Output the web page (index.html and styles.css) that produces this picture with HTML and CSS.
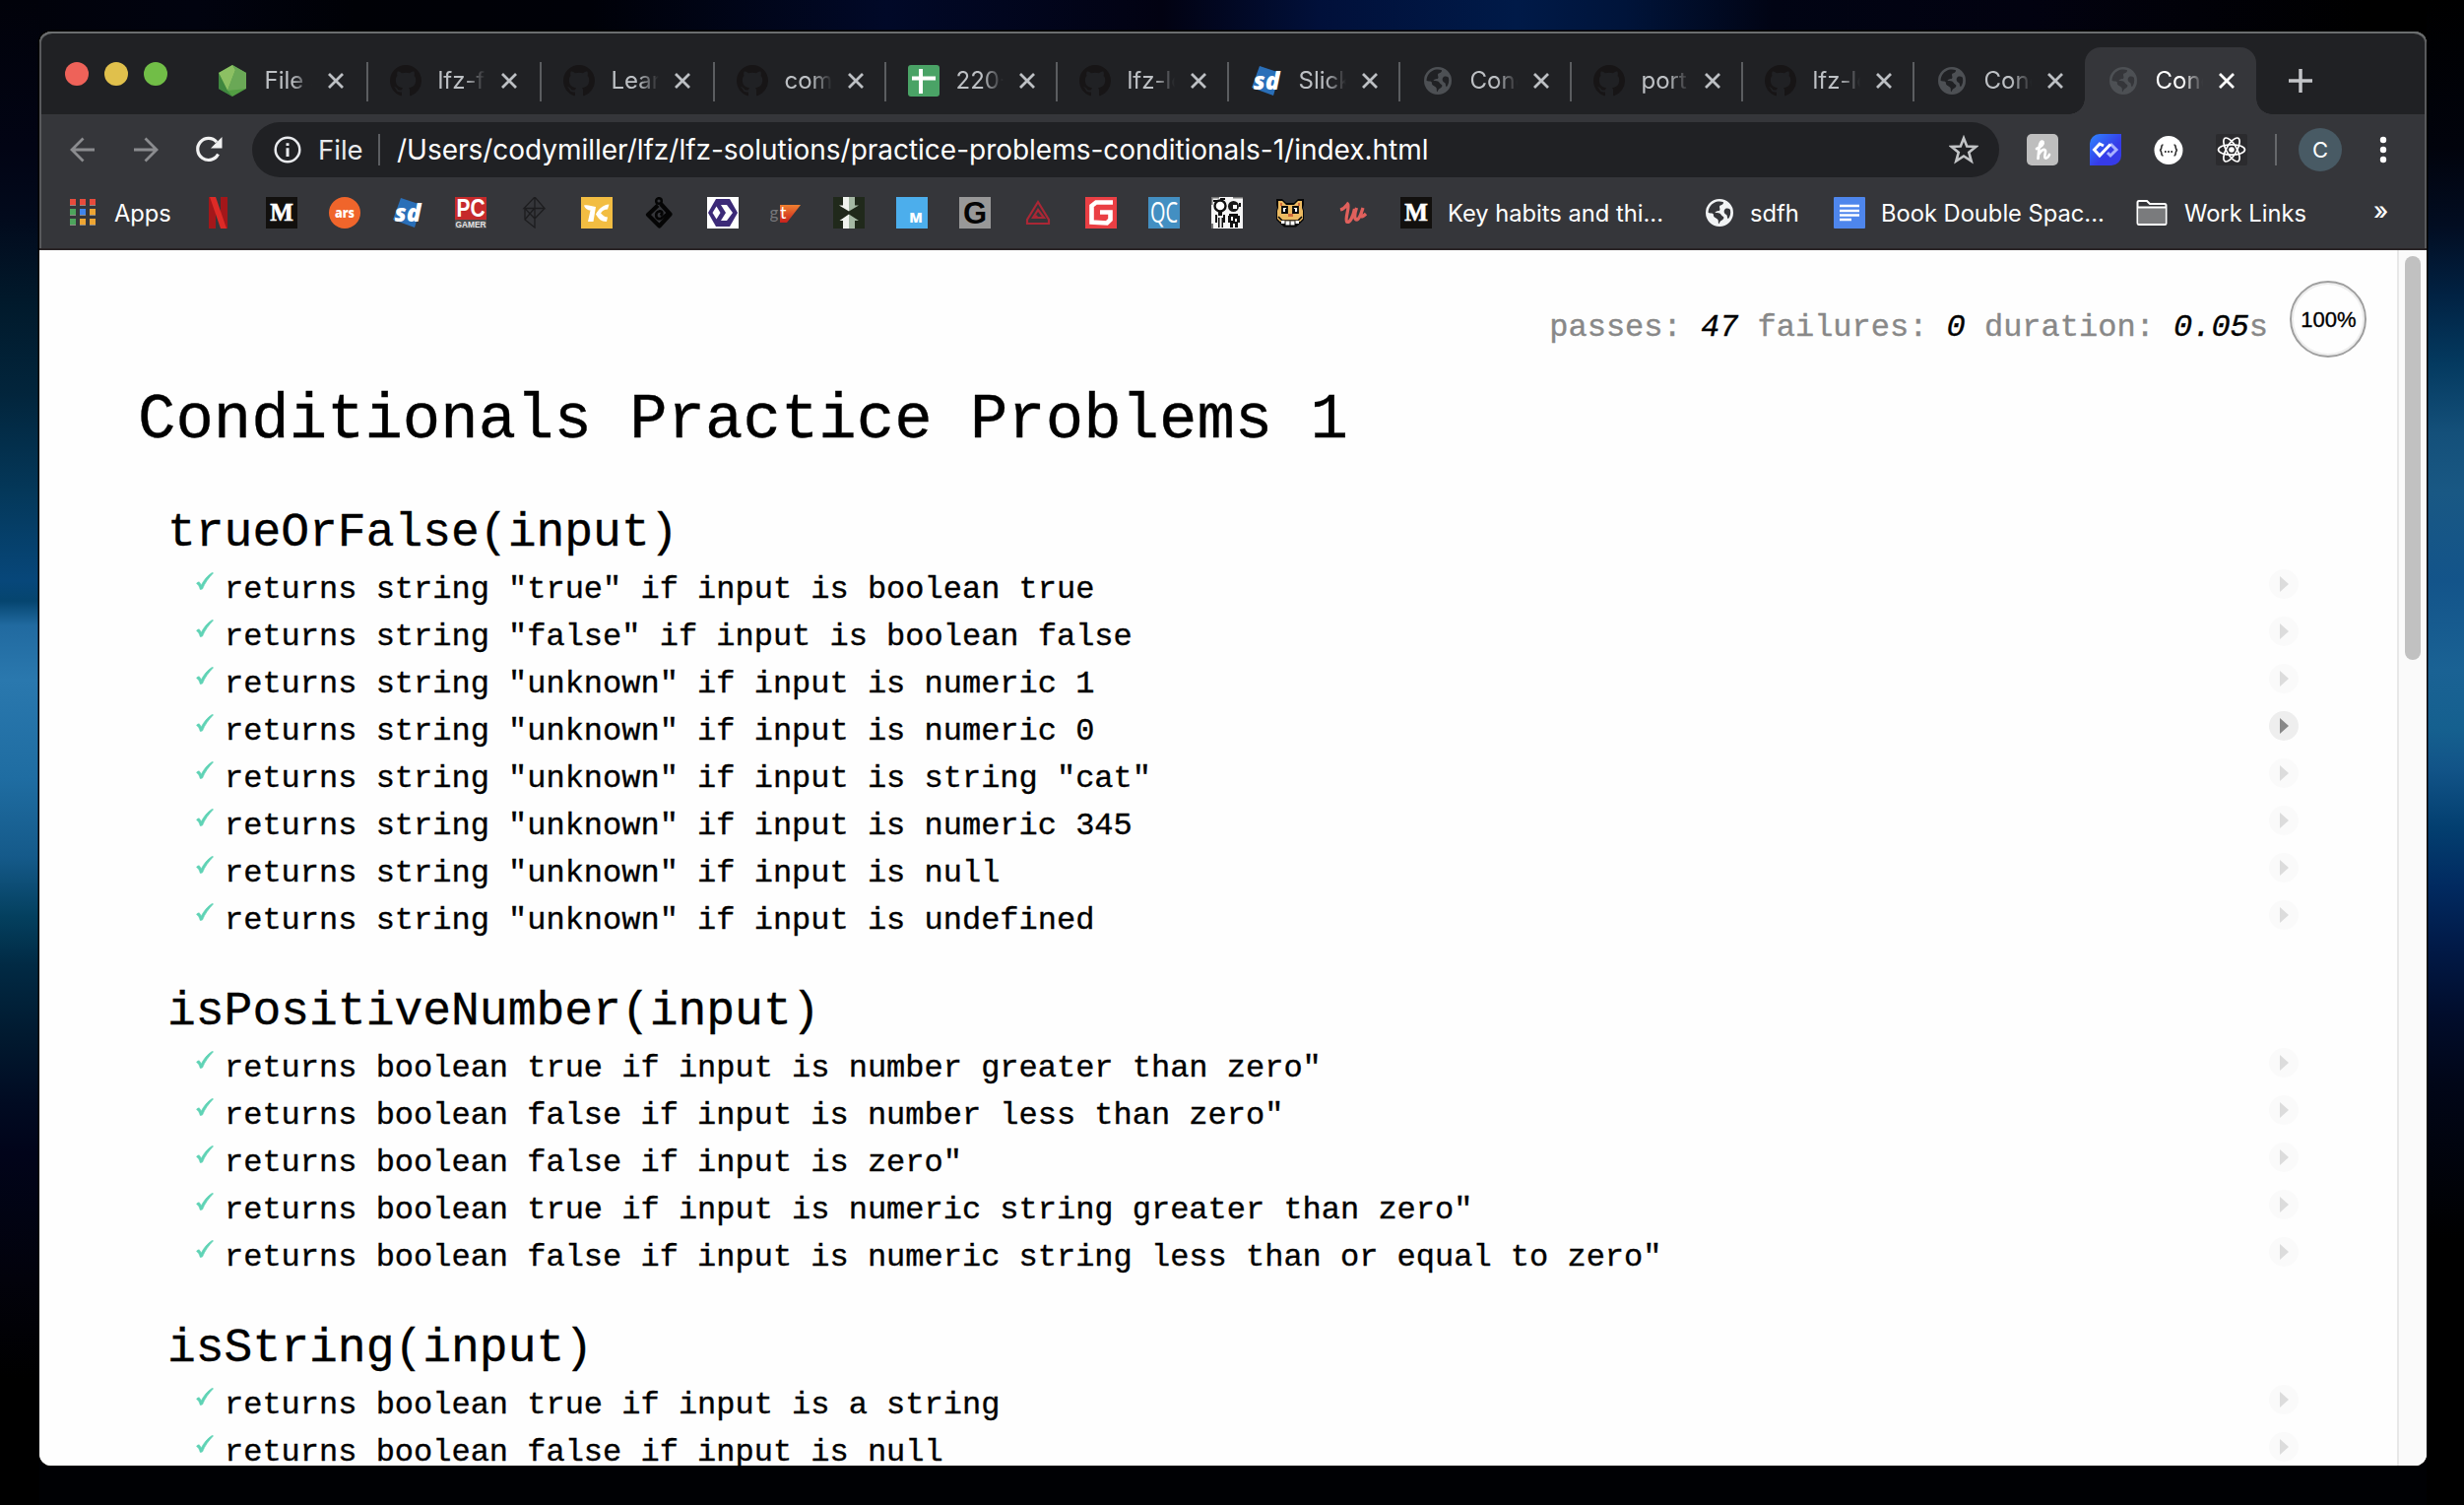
FILE: index.html
```html
<!DOCTYPE html>
<html lang="en">
<head>
<meta charset="utf-8">
<title>Conditionals Practice Problems 1</title>
<link rel="stylesheet" href="styles.css">
</head>
<body>
<svg class="defs" width="0" height="0" aria-hidden="true">
  <symbol id="github" viewBox="0 0 16 16"><path fill="#171516" fill-rule="evenodd" d="M8 0C3.58 0 0 3.58 0 8c0 3.54 2.29 6.53 5.47 7.59.4.07.55-.17.55-.38 0-.19-.01-.82-.01-1.49-2.01.37-2.53-.49-2.69-.94-.09-.23-.48-.94-.82-1.13-.28-.15-.68-.52-.01-.53.63-.01 1.08.58 1.23.82.72 1.21 1.87.87 2.33.66.07-.52.28-.87.51-1.07-1.78-.2-3.64-.89-3.64-3.95 0-.87.31-1.59.82-2.15-.08-.2-.36-1.02.08-2.12 0 0 .67-.21 2.2.82.64-.18 1.32-.27 2-.27s1.36.09 2 .27c1.53-1.04 2.2-.82 2.2-.82.44 1.1.16 1.92.08 2.12.51.56.82 1.27.82 2.15 0 3.07-1.87 3.75-3.65 3.95.29.25.54.73.54 1.48 0 1.07-.01 1.93-.01 2.2 0 .21.15.46.55.38A8.01 8.01 0 0 0 16 8c0-4.42-3.58-8-8-8z"/></symbol>
  <symbol id="globe" viewBox="0 0 28 28"><path fill="currentColor" fill-rule="evenodd" d="M14 0a14 14 0 1 0 0 28a14 14 0 0 0 0-28zM11 2.8c2.5-.6 5-.4 7 .4c0 1-.3 2-1.3 2.600c-1.200.7-2.700.7-2.700 2.200c0 1.500.8 2 .3 3.200c-.6 1.200-2 1-3.200 1.200c-1 .2-1 1.500-2 1.600c1.500.2 3.500 0 5 .6c1.700.8 1.500 2.400 3 2.900c1.300.4 1.700 1.500.9 2.700c-1 1.500-2.600 1.300-3.400 2.700c-.4.800-.5 1.700-1.500 2.400c-.6-1.500.1-3-.7-4.200c-1.200-1.600-3.600-1.700-4.300-3.500c-.4-1 .1-1.800-.7-2.500c-1.200-.9-3.500-.6-4.800-1.100c0-5.400 3.400-9.600 8.400-11.200zM20 10c1.700-.8 3.400-.3 4.900.7c.8 3.600 0 7-2 9.500c-1-.7-1-1.800-1.100-2.900c-.1-1.300-1.400-1.400-2.300-2.300c-1.300-1.400-1.100-4 .5-5z"/></symbol>
  <symbol id="close" viewBox="0 0 18 18"><path d="M2 2L16 16M16 2L2 16" fill="none" stroke="currentColor" stroke-width="2.800"/></symbol>
  <symbol id="sd" viewBox="0 0 32 32"><path fill="#2a6fb8" d="M9 1L30 8L23 31L1 23z"/><text x="16" y="25" text-anchor="middle" font-family="Open Sans" font-weight="800" font-style="italic" font-size="25" textLength="27" lengthAdjust="spacingAndGlyphs" fill="#fff">sd</text></symbol>
  <symbol id="medium" viewBox="0 0 32 32"><path fill="#12100e" d="M0 0h32v32H0z"/><text x="16" y="24" text-anchor="middle" font-family="Liberation Serif" font-weight="bold" font-size="25" fill="#fff" stroke="#fff" stroke-width=".6">M</text></symbol>
  <symbol id="check" viewBox="0 0 18 18"><path fill="#5fd3b5" stroke="#5fd3b5" stroke-width=".7" d="M.6 11.400C1.700 9.700 3.300 9.500 3.900 10.600L5.200 13.300C8 8 11.500 3.500 16.300.5L17.500.8C12.500 6 9 11 6.500 17L4.300 17.500C3.500 14.500 2.500 12.500.6 11.400z"/></symbol>
</svg>

<div class="window">
  <header class="chrome">
    <div class="tabstrip">
      <div class="lights"><i class="light red"></i><i class="light yellow"></i><i class="light green"></i></div>
      <div class="tabs">
        <div class="tab wide"><svg class="fav" viewBox="0 0 32 32"><path fill="#539e43" d="M16 0L30 8V24L16 32L2 24V8z"/><path fill="#8cc063" d="M16 0L2 8L11 26L19 5z"/><path fill="#6aa856" d="M19 5L11 26L30 24V8L16 0z"/><path fill="#3f873f" d="M2 8V24L16 32L11 26z"/></svg><span class="title">File S</span><svg class="x"><use href="#close"/></svg></div>
        <div class="tab wide"><svg class="fav"><use href="#github"/></svg><span class="title">lfz-fu</span><svg class="x"><use href="#close"/></svg></div>
        <div class="tab wide"><svg class="fav"><use href="#github"/></svg><span class="title">Learn</span><svg class="x"><use href="#close"/></svg></div>
        <div class="tab"><svg class="fav"><use href="#github"/></svg><span class="title">com</span><svg class="x"><use href="#close"/></svg></div>
        <div class="tab"><svg class="fav" viewBox="0 0 32 32"><rect width="32" height="32" rx="3" fill="#4aa366"/><path d="M13 4V29M4 13.500H28" stroke="#fff" stroke-width="4"/></svg><span class="title">220-</span><svg class="x"><use href="#close"/></svg></div>
        <div class="tab"><svg class="fav"><use href="#github"/></svg><span class="title">lfz-lo</span><svg class="x"><use href="#close"/></svg></div>
        <div class="tab"><svg class="fav"><use href="#sd"/></svg><span class="title">Slick</span><svg class="x"><use href="#close"/></svg></div>
        <div class="tab"><svg class="fav globe"><use href="#globe"/></svg><span class="title">Cond</span><svg class="x"><use href="#close"/></svg></div>
        <div class="tab"><svg class="fav"><use href="#github"/></svg><span class="title">port</span><svg class="x"><use href="#close"/></svg></div>
        <div class="tab"><svg class="fav"><use href="#github"/></svg><span class="title">lfz-lo</span><svg class="x"><use href="#close"/></svg></div>
        <div class="tab last"><svg class="fav globe"><use href="#globe"/></svg><span class="title">Cond</span><svg class="x"><use href="#close"/></svg></div>
        <div class="tab active"><svg class="fav globe"><use href="#globe"/></svg><span class="title">Cond</span><svg class="x"><use href="#close"/></svg></div>
      </div>
      <svg class="plus" viewBox="0 0 24 24"><path d="M12 0V24M0 12H24" stroke="#c3c5c8" stroke-width="3.500"/></svg>
    </div>

    <div class="toolbar">
      <div class="nav">
        <svg viewBox="0 0 26 26"><path d="M25 13H2M13.500 1.500L2 13L13.500 24.500" fill="none" stroke="#8b8c8f" stroke-width="2.800"/></svg>
        <svg viewBox="0 0 26 26"><path d="M1 13H24M12.500 1.500L24 13L12.500 24.500" fill="none" stroke="#8b8c8f" stroke-width="2.800"/></svg>
        <svg class="reload" viewBox="0 0 28 28"><path d="M23.500 18.500A11 11 0 1 1 22 6.200" fill="none" stroke="#f1f1f1" stroke-width="3.200"/><path d="M27.500 1V12.500H16z" fill="#f1f1f1"/></svg>
      </div>
      <div class="omnibox">
        <svg class="info" viewBox="0 0 28 28"><circle cx="14" cy="14" r="12.300" fill="none" stroke="#e8eaed" stroke-width="2.500"/><path d="M14 7.200V10M14 12.300V21" stroke="#e8eaed" stroke-width="3"/></svg>
        <span class="scheme">File</span>
        <i class="bar"></i>
        <span class="url">/Users/codymiller/lfz/lfz-solutions/practice-problems-conditionals-1/index.html</span>
        <svg class="star" viewBox="0 0 28 28"><path d="M14 3L17 10.800L25.500 11.200L18.900 16.500L21.200 24.800L14 20L6.800 24.800L9.100 16.500L2.500 11.200L11 10.800z" fill="none" stroke="#c2c4c6" stroke-width="2.400"/></svg>
      </div>
      <div class="extensions">
        <svg viewBox="0 0 32 32"><rect width="32" height="32" rx="5" fill="#bebebe"/><path d="M10 15C15 13 17.500 10 16.500 8C15 6.500 13 9 12.500 14L11.500 25M12 21C14 17 18 14 19 17C19.500 19 17 24 19 24.500C21 25 22 23 23 21" fill="none" stroke="#fff" stroke-width="2.700" stroke-linecap="round"/></svg>
        <svg viewBox="0 0 32 32"><defs><linearGradient id="blue" x1="0" y1="0" x2="1" y2="1"><stop offset="0" stop-color="#2f86ff"/><stop offset=".6" stop-color="#363be8"/></linearGradient></defs><path fill="url(#blue)" d="M10 0H32V22A10 10 0 0 1 22 32H0V10A10 10 0 0 1 10 0z"/><path d="M21 10L27 16L21 22L18 19" fill="none" stroke="#a9b2ff" stroke-width="3"/><path d="M14 12L10 10L4.500 16L10 22L21 10.500" fill="none" stroke="#fff" stroke-width="3"/></svg>
        <svg viewBox="0 0 32 32"><circle cx="16" cy="16.500" r="14.500" fill="#fff"/><path d="M10.500 11C7.500 11 10 16 7 16.500C10 17 7.500 22 10.500 22M21.500 11C24.500 11 22 16 25 16.500C22 17 24.500 22 21.500 22" fill="none" stroke="#333" stroke-width="1.600"/><path d="M12 18h1.600M15.200 18h1.600M18.400 18h1.600" stroke="#333" stroke-width="1.800"/></svg>
        <svg viewBox="0 0 32 32"><rect width="32" height="32" rx="2" fill="#2b2b2e"/><g fill="none" stroke="#fff" stroke-width="1.700"><ellipse cx="16" cy="16" rx="13.500" ry="5.200"/><ellipse cx="16" cy="16" rx="13.500" ry="5.200" transform="rotate(60 16 16)"/><ellipse cx="16" cy="16" rx="13.500" ry="5.200" transform="rotate(120 16 16)"/></g><circle cx="16" cy="16" r="2.800" fill="#fff"/></svg>
      </div>
      <i class="bar tall"></i>
      <span class="avatar">C</span>
      <svg class="menu" viewBox="0 0 8 28"><circle cx="4" cy="4" r="3.200"/><circle cx="4" cy="14" r="3.200"/><circle cx="4" cy="24" r="3.200"/></svg>
    </div>

    <div class="bookmarks">
      <svg class="apps" viewBox="0 0 26 28"><g><path fill="#e84b3c" d="M0 0h6v6H0zM10 0h6v6h-6zM20 0h6v6h-6z"/><path fill="#4da45c" d="M0 10h6v6H0zM0 20h6v6H0z"/><path fill="#3f84ec" d="M10 10h6v6h-6z"/><path fill="#eda533" d="M20 10h6v6h-6zM10 20h6v6h-6zM20 20h6v6h-6z"/><path fill="#8f8a86" d="M0 6h6v1H0zM10 6h6v1h-6zM20 6h6v1h-6zM0 16h6v1H0zM10 16h6v1h-6zM20 16h6v1h-6zM0 26h6v1H0zM10 26h6v1h-6zM20 26h6v1h-6z"/></g></svg>
      <span class="label apps-label">Apps</span>
      <div class="icons">
        <svg viewBox="0 0 32 32"><path fill="#a3171a" d="M6 0h7v32H6zM18 0h7v32h-7z"/><path fill="#dd2a26" d="M7 0h6l11 32h-6z"/></svg>
        <svg><use href="#medium"/></svg>
        <svg viewBox="0 0 32 32"><circle cx="16" cy="16" r="16" fill="#f0652b"/><text x="16" y="20.500" text-anchor="middle" font-family="Open Sans" font-weight="800" font-size="14" textLength="20" lengthAdjust="spacingAndGlyphs" fill="#fff">ars</text></svg>
        <svg><use href="#sd"/></svg>
        <svg viewBox="0 0 32 32"><path fill="#c62a2b" d="M0 0h32v23H0z"/><text x="16" y="20" text-anchor="middle" font-family="Liberation Sans" font-weight="bold" font-size="25" textLength="29" lengthAdjust="spacingAndGlyphs" fill="#fff">PC</text><path fill="#4b4b4d" d="M0 23h32v9H0z"/><text x="16" y="31" text-anchor="middle" font-family="Liberation Sans" font-weight="bold" font-size="9.500" textLength="31" lengthAdjust="spacingAndGlyphs" fill="#e6e6e6">GAMER</text></svg>
        <svg viewBox="0 0 32 32"><path d="M17 0L6 11.500H27L17 0V31L7 23V11.500L17 22L27 11.500M7 23L17 11" fill="none" stroke="#1d1d1f" stroke-width="1.300"/></svg>
        <svg viewBox="0 0 32 32"><path fill="#f2bd42" d="M0 0h32v32H0z"/><path fill="#fff" d="M3 8.500C7 7.500 10 9 15 10L12.500 25H7L9.500 13.500C7 13.500 4 12 3 8.500zM28.500 7.500L27 12.500C24 12.500 21.500 14 20 16.500C22 18 23 20 27 20.500L26 25C20 25 17.500 22 15 17.500C18 12 22 8 28.500 7.500z"/></svg>
        <svg viewBox="0 0 32 32"><circle cx="15" cy="4" r="2.800" fill="none" stroke="#050505" stroke-width="2.500"/><path d="M17 7L26.500 17.500L15.500 29.500L4 18L14 8.500" fill="none" stroke="#050505" stroke-width="4.200" stroke-linejoin="round"/><path d="M24 16.500L17 22C11.500 23.500 10.500 15.500 15.500 14.500C19 14 19 17.500 16.500 18.500" fill="none" stroke="#050505" stroke-width="2.800"/></svg>
        <svg viewBox="0 0 32 32"><path fill="#fff" d="M0 0h32v32H0z"/><path fill="#3c2a78" d="M9 2H23L31 16L23 30H9L1 16z"/><path fill="#fff" d="M9.500 9.500L13.500 16L9.500 22.500L5.500 16zM14 8H20L26 16L20 24H14L19 16z"/></svg>
        <svg viewBox="0 0 32 32"><defs><linearGradient id="gt" x1="0" y1="0" x2="0" y2="1"><stop offset="0" stop-color="#f08030"/><stop offset="1" stop-color="#c8201c"/></linearGradient></defs><path fill="url(#gt)" d="M10 8H31L17 26H10z"/><text x="-.5" y="22" font-family="Lato" font-size="17" fill="#77777a">g</text><text x="10" y="22" font-family="Lato" font-size="18" fill="#fff">t</text></svg>
        <svg viewBox="0 0 32 32"><path fill="#20291b" d="M0 0h32v32H0z"/><path fill="#f0f4ee" d="M10 0h6v14.500L6 8.500h4zM16 17.500V32h-6v-8H6.500z"/><path fill="#a5b8a4" d="M16 0h6v8.500h4L16 14.500zM16 17.500L26 24h-4v8h-6z"/></svg>
        <svg viewBox="0 0 32 32"><path fill="#4caeec" d="M0 0h32v32H0z"/><text x="20" y="26" text-anchor="middle" font-family="Open Sans" font-weight="800" font-size="14" fill="#fff">M</text></svg>
        <svg viewBox="0 0 32 32"><path fill="#989898" d="M0 0h32v32H0z"/><text x="16" y="27" text-anchor="middle" font-family="Liberation Sans" font-weight="bold" font-size="31" fill="#050505">G</text></svg>
        <svg viewBox="0 0 32 32"><path d="M16 5L27 23V27H5V23zM16 13L11 21H22z" fill="none" stroke="#aa2735" stroke-width="2.200"/><circle cx="14" cy="20" r="1.800" fill="#aa2735"/></svg>
        <svg viewBox="0 0 32 32"><path fill="#ea3f44" d="M0 0h32v32H0z"/><path d="M28 5.500H11L6.500 9V25.500L22 26.500L25.500 23V15.500H15" fill="none" stroke="#fff" stroke-width="4.600"/></svg>
        <svg viewBox="0 0 32 32"><path fill="#438fc2" d="M0 0h32v32H0z"/><text x="16" y="26" text-anchor="middle" font-family="Open Sans" font-weight="400" font-size="29" textLength="28" lengthAdjust="spacingAndGlyphs" fill="#fff">QC</text></svg>
        <svg viewBox="0 0 32 32"><path fill="#f5f5f5" d="M0 0h32v32H0z"/><circle cx="9" cy="9" r="5.500" fill="#fff" stroke="#111" stroke-width="2.400"/><circle cx="22.500" cy="9.500" r="5.500" fill="#1a1a1a"/><path fill="#fff" d="M22 8h4v4h-4z"/><path d="M2 3h4v2H2zM9 1h5v2H9zM7 15h4v4H7zM4 18h2v8H4zM12 18h2v8h-2zM7 21h1.500v10H7zM10.500 21H12v10h-1.500zM18 17h9v2h2v7h-2v5h-3v-4h-2v4h-3v-5h-2v-7h1zM28 6h2v4h-2z" fill="#111"/><path fill="#fff" d="M20 20h2v4h-2zM24 22h2v3h-2z"/><path d="M0 0h8v1.500H1.500V8H0zM22 0h10v1.500H22zM0 27h2v5H0z" fill="#777"/></svg>
        <svg viewBox="0 0 32 32"><path fill="#080808" d="M2 2h6l4 4h8l4-4h6v6l-1 3l1 3v9l-4 4-4 3.500H10L6 27l-4-4V14l1-3l-1-3z"/><path fill="#edbb62" d="M4 4h4l4 4h8l4-4h4v7l1 3v8l-3 3H6l-3-3v-8l1-3z"/><path d="M8 10h5v6H8zM19 10h5v6h-5z" fill="#fff" stroke="#080808" stroke-width="1.800"/><path fill="#080808" d="M11 12h2v3h-2zM19 12h2v3h-2z"/><path d="M4 20L8 24H24L28 20" fill="none" stroke="#080808" stroke-width="1.600"/><path fill="#cf6b3c" d="M14 17h5v3h-5zM6 6h2v3H6zM24 6h2v3h-2z"/><path fill="#fff" d="M7 24h3.500v3H7zM11.500 24.500h4v4h-4zM16.500 24.500h4v4h-4zM21.500 24h3.500v3h-3.500z"/></svg>
        <svg viewBox="0 0 32 32"><path d="M3 13C7 12 9 9 10.500 7C13 9 7.500 22 9.500 25C13 27 16 19 17.500 12M19.500 11C17 18 17 23 20 23C23 22 24.500 15 26 11C23 19 23 23 29 17" fill="none" stroke="#e0605c" stroke-width="3.300"/></svg>
        <svg><use href="#medium"/></svg>
      </div>
      <span class="label habits">Key habits and thi...</span>
      <svg class="bm-globe"><use href="#globe"/></svg>
      <span class="label sdfh">sdfh</span>
      <svg class="doc" viewBox="0 0 32 32"><rect width="32" height="32" rx="1" fill="#4e86ec"/><path d="M6 9H26M6 14H26M6 18.500H26M6 23H18" stroke="#fff" stroke-width="2.400"/></svg>
      <span class="label book">Book Double Spac...</span>
      <svg class="folder" viewBox="0 0 32 28"><path d="M1.500 24V3.500Q1.500 2 3 2H11L14 5H29Q30.500 5 30.500 6.500V24.500Q30.500 26 29 26H3Q1.500 26 1.500 24z" fill="#35363a" stroke="#fff" stroke-width="2"/><path d="M2.500 9H29.500V25H2.500z" fill="#7a7b7d"/><path d="M2 8.500H30" stroke="#fff" stroke-width="1.800"/></svg>
      <span class="label work">Work Links</span>
      <span class="more">»</span>
    </div>
  </header>

  <div class="viewport">
    <main class="report">
      <div class="stats">
        <p>passes: <em>47</em> failures: <em>0</em> duration: <em>0.05</em>s</p>
        <div class="progress">100%</div>
      </div>
      <h1>Conditionals Practice Problems 1</h1>
      <section>
        <h2>trueOrFalse(input)</h2>
        <ul>
          <li><svg class="tick"><use href="#check"/></svg><span>returns string "true" if input is boolean true</span><i class="replay"></i></li>
          <li><svg class="tick"><use href="#check"/></svg><span>returns string "false" if input is boolean false</span><i class="replay"></i></li>
          <li><svg class="tick"><use href="#check"/></svg><span>returns string "unknown" if input is numeric 1</span><i class="replay"></i></li>
          <li><svg class="tick"><use href="#check"/></svg><span>returns string "unknown" if input is numeric 0</span><i class="replay hover"></i></li>
          <li><svg class="tick"><use href="#check"/></svg><span>returns string "unknown" if input is string "cat"</span><i class="replay"></i></li>
          <li><svg class="tick"><use href="#check"/></svg><span>returns string "unknown" if input is numeric 345</span><i class="replay"></i></li>
          <li><svg class="tick"><use href="#check"/></svg><span>returns string "unknown" if input is null</span><i class="replay"></i></li>
          <li><svg class="tick"><use href="#check"/></svg><span>returns string "unknown" if input is undefined</span><i class="replay"></i></li>
        </ul>
      </section>
      <section>
        <h2>isPositiveNumber(input)</h2>
        <ul>
          <li><svg class="tick"><use href="#check"/></svg><span>returns boolean true if input is number greater than zero"</span><i class="replay"></i></li>
          <li><svg class="tick"><use href="#check"/></svg><span>returns boolean false if input is number less than zero"</span><i class="replay"></i></li>
          <li><svg class="tick"><use href="#check"/></svg><span>returns boolean false if input is zero"</span><i class="replay"></i></li>
          <li><svg class="tick"><use href="#check"/></svg><span>returns boolean true if input is numeric string greater than zero"</span><i class="replay"></i></li>
          <li><svg class="tick"><use href="#check"/></svg><span>returns boolean false if input is numeric string less than or equal to zero"</span><i class="replay"></i></li>
        </ul>
      </section>
      <section>
        <h2>isString(input)</h2>
        <ul>
          <li><svg class="tick"><use href="#check"/></svg><span>returns boolean true if input is a string</span><i class="replay"></i></li>
          <li><svg class="tick"><use href="#check"/></svg><span>returns boolean false if input is null</span><i class="replay"></i></li>
        </ul>
      </section>
    </main>
    <div class="scrollbar"><i class="thumb"></i></div>
  </div>
</div>
</body>
</html>
```

FILE: styles.css
```css
* { box-sizing: border-box; }

body {
  margin: 0;
  width: 2502px;
  height: 1528px;
  padding: 32px 38px 40px 40px;
  overflow: hidden;
  font-family: Inter, "Liberation Sans", sans-serif;
  background:
    linear-gradient(#01020a 0, #020414 150px, #020a1c 220px, #011a2c 310px, #02253c 400px, #04385a 500px, #07477a 590px, #05456f 610px, #216aa0 635px, #2a78ae 690px, #1f6da2 790px, #155a8a 870px, #04405f 930px, #012a44 980px, #011a30 1050px, #010b22 1120px, #01041a 1170px, #02020b 1300px, #000 1400px) 0 0 / 40px 100% no-repeat,
    linear-gradient(#000 0, #01030c 150px, #020d22 230px, #012243 300px, #043a60 370px, #14507a 440px, #195884 500px, #13548a 590px, #1a6294 680px, #15608f 740px, #125488 780px, #033f70 840px, #012a60 900px, #011a48 960px, #010d2c 1030px, #010618 1100px, #000 1260px) 100% 0 / 38px 100% no-repeat,
    linear-gradient(90deg, #01020a 0, #01030f 200px, #000106 360px, #000108 600px, #010928 900px, #020212 1180px, #01103a 1340px, #001a48 1540px, #00143a 1650px, #010414 1800px, #020210 2060px, #000 2400px) 0 0 / 100% 40px no-repeat,
    #000104;
}

h1, h2, p, ul { margin: 0; padding: 0; font-weight: 400; }
svg { display: block; flex: none; }
.defs { display: none; }

.window {
  width: 2424px;
  height: 1456px;
  display: flex;
  flex-direction: column;
  border-radius: 12px;
  overflow: hidden;
  background: #fff;
  box-shadow: 0 0 0 1.5px #000;
}

.chrome {
  height: 222px;
  background: #35363a;
  border-bottom: 2px solid #292426;
  border-radius: 12px 12px 0 0;
  box-shadow: inset 0 2px 0 #6b6e6f, inset 2px 0 0 #58595c, inset -2px 0 0 #58595c;
}

/* tab strip */
.tabstrip {
  height: 84px;
  margin: 0 2px;
  padding-left: 24px;
  display: flex;
  background: #202124;
  border-top: 2px solid #6b6e6f;
  border-radius: 11px 11px 0 0;
}
.lights { width: 131px; display: flex; gap: 16px; padding-top: 29px; }
.light { width: 24px; height: 24px; border-radius: 50%; }
.red { background: #ee6259; }
.yellow { background: #e0c04c; }
.green { background: #71be47; }
.tabs { display: flex; padding-top: 14px; }
.tab {
  position: relative;
  width: 174px;
  height: 68px;
  padding-left: 22.500px;
  display: flex;
  align-items: center;
  color: #bdc0c4;
}
.tab.wide { width: 176px; }
.tab::after {
  content: "";
  position: absolute;
  right: -1px;
  top: 15px;
  width: 2px;
  height: 40px;
  background: #5b5d60;
}
.tab.last::after { display: none; }
.fav { width: 32px; height: 32px; }
.fav.globe { width: 28px; height: 28px; margin: 0 2px; color: #4d5054; }
.title {
  width: 49px;
  margin: 0 14px 0 17px;
  overflow: hidden;
  white-space: nowrap;
  font-size: 24px;
  line-height: 34px;
  -webkit-mask-image: linear-gradient(90deg, #000 55%, transparent 98%);
  mask-image: linear-gradient(90deg, #000 55%, transparent 98%);
}
.x { width: 18px; height: 18px; }
.tab.active { background: #35363a; color: #fff; border-radius: 16px 16px 0 0; }
.tab.active::before, .tab.active::after {
  content: "";
  position: absolute;
  top: auto;
  bottom: 0;
  width: 16px;
  height: 16px;
}
.tab.active::before { left: -16px; background: radial-gradient(circle at 0 0, #202124 15.5px, #35363a 16px); }
.tab.active::after { right: -16px; background: radial-gradient(circle at 100% 0, #202124 15.5px, #35363a 16px); }
.plus { width: 24px; height: 24px; margin: 36px 0 0 33px; }

/* toolbar */
.toolbar { height: 72px; padding: 0 40px 0 31px; display: flex; align-items: center; }
.nav { width: 185px; display: flex; gap: 38px; }
.nav svg { width: 26px; height: 26px; }
.nav .reload { width: 28px; height: 28px; margin: -1px 0 0 -1px; }
.omnibox {
  width: 1774px;
  height: 56px;
  padding: 0 21px 0 22px;
  display: flex;
  align-items: center;
  border-radius: 28px;
  background: #202124;
  color: #fff;
  font-size: 28px;
}
.info { width: 28px; height: 28px; }
.scheme { width: 60px; margin-left: 17px; margin-right: 1px; color: #e8eaed; font-size: 27.500px; }
.bar { width: 2px; height: 32px; background: #5b5d61; }
.url { flex: 1; margin-left: 17px; white-space: nowrap; letter-spacing: -.02px; }
.star { width: 30px; height: 30px; }
.extensions { display: flex; gap: 32px; margin-left: 28px; }
.extensions svg { width: 32px; height: 32px; }
.bar.tall { margin: 0 22px 0 28px; background: #66686b; }
.avatar {
  width: 44px;
  height: 44px;
  border-radius: 50%;
  background: #485a64;
  color: #fff;
  font-size: 22px;
  line-height: 44px;
  text-align: center;
}
.menu { width: 8px; height: 28px; margin-left: 38px; fill: #fff; }

/* bookmarks bar */
.bookmarks { height: 56px; padding-left: 31px; display: flex; align-items: center; }
.apps { width: 26px; height: 28px; }
.label { color: #fff; font-size: 23.700px; white-space: nowrap; }
.apps-label { width: 90px; margin-left: 19px; }
.icons { display: flex; gap: 32px; }
.icons svg { width: 32px; height: 32px; }
.habits { width: 262px; margin-left: 16px; }
.bm-globe { width: 28px; height: 28px; color: #f1f3f4; }
.sdfh { width: 85px; margin-left: 17px; }
.doc { width: 32px; height: 32px; }
.book { width: 259px; margin-left: 16px; }
.folder { width: 32px; height: 28px; }
.work { width: 192px; margin-left: 17px; }
.more { color: #fff; font-size: 25px; font-weight: 500; line-height: 30px; margin-top: -4px; }

/* page */
.viewport { flex: 1; min-height: 0; display: flex; overflow: hidden; background: #fefefe; }
.report {
  width: 2394px;
  height: 1234px;
  padding: 31px 31px 0 100px;
  overflow: hidden;
  color: #000;
  font-family: "Liberation Mono", "Courier New", monospace;
  -webkit-text-stroke: .35px currentColor;
}
.stats { height: 78px; display: flex; justify-content: flex-end; gap: 22px; font-size: 32px; color: #888; }
.stats p { padding-top: 9px; line-height: 78px; height: 78px; white-space: pre; }
.stats em { color: #000; }
.progress {
  width: 78px;
  height: 78px;
  padding-left: 1px;
  border: 2px solid #9f9f9f;
  border-radius: 50%;
  box-shadow: inset 0 0 0 2px #eee;
  color: #000;
  font: 22px/75px "Liberation Sans", Arial, sans-serif;
  text-align: center;
}
h1 { height: 80px; margin: 24px 0 43px; font-size: 64px; line-height: 80px; }
section { margin: 0 69px 37px 30px; }
h2 { height: 60px; margin-bottom: 4px; font-size: 48px; line-height: 62px; }
ul { list-style: none; padding-bottom: 1px; }
li { height: 48px; padding-left: 29px; display: flex; font-size: 32px; line-height: 50px; white-space: pre; }
.tick { width: 18px; height: 18px; margin: 7px 11px 0 0; }
li span { flex: 1; }
.replay {
  width: 30px;
  height: 30px;
  margin-top: 4px;
  padding: 7px 0 0 11px;
  border-radius: 50%;
  background: #fafafa;
}
.replay::before {
  content: "";
  display: block;
  border: solid transparent;
  border-width: 8px 0 8px 9px;
  border-left-color: #dcdcdc;
  width: 0;
  height: 0;
}
.replay.hover { background: #eee; }
.replay.hover::before { border-left-color: #888; }
.scrollbar { flex: 1; border-left: 2px solid #e8e8e8; background: #fafafa; padding: 6px 0 0 6px; }
.thumb { display: block; width: 16px; height: 410px; border-radius: 8px; background: #c1c1c1; }
```
